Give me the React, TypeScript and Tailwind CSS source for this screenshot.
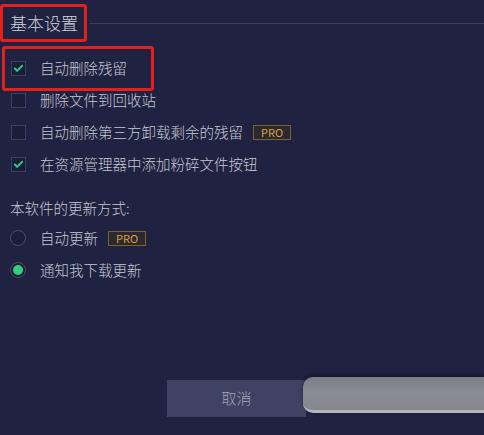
import { Check } from "lucide-react";

const font = { fontFamily: '"Noto Sans CJK SC", "Noto Sans", sans-serif' };

function Pro() {
  return (
    <span className="ml-[10px] inline-flex h-[15px] w-[38px] items-center justify-center border border-[#7d622c] bg-[#2c2830] text-[11px] leading-none text-[#d8a33c]">
      PRO
    </span>
  );
}

function CheckRow({ label, checked, pro }: { label: string; checked?: boolean; pro?: boolean }) {
  return (
    <div className="flex h-8 items-center pl-[11px]">
      <span className="flex h-[15px] w-[15px] items-center justify-center border border-[#3c4060] bg-[#1b1e38]">
        {checked && <Check size={11} strokeWidth={4} className="text-[#2fcf8a]" />}
      </span>
      <span className="ml-[14px] text-[14.5px] font-light text-[#c6c8d4]">{label}</span>
      {pro && <Pro />}
    </div>
  );
}

function RadioRow({ label, checked, pro }: { label: string; checked?: boolean; pro?: boolean }) {
  return (
    <div className="flex h-8 items-center pl-[10px]">
      <span className="flex h-4 w-4 items-center justify-center rounded-full border border-[#4a4e6a] bg-[#1b1e38]">
        {checked && <span className="h-[10px] w-[10px] rounded-full bg-[#2fd07c]" />}
      </span>
      <span className="ml-[14px] text-[14.5px] font-light text-[#c6c8d4]">{label}</span>
      {pro && <Pro />}
    </div>
  );
}

export default function App() {
  return (
    <div className="relative h-[435px] w-[484px] overflow-hidden bg-[#1f2240]" style={font}>
      {/* section title */}
      <div className="flex items-center pt-[12px]">
        <span className="pl-[10px] text-[17px] leading-[22px] font-light text-[#d2d4de]">基本设置</span>
        <div className="ml-[11px] h-px flex-1 bg-[#3a3e5e]" />
      </div>

      <div className="mt-[18px]">
        <CheckRow label="自动删除残留" checked />
        <CheckRow label="删除文件到回收站" />
        <CheckRow label="自动删除第三方卸载剩余的残留" pro />
        <CheckRow label="在资源管理器中添加粉碎文件按钮" checked />
      </div>

      <div className="mt-[18px] h-5 pl-[10px] text-[14.5px] leading-5 font-light text-[#c6c8d4]">本软件的更新方式:</div>

      <div className="mt-1">
        <RadioRow label="自动更新" pro />
        <RadioRow label="通知我下载更新" checked />
      </div>

      <div className="mt-[94px] flex pl-[167px]">
        <button className="h-[37px] w-[139px] bg-[#3f4262] text-[15px] font-light text-[#a3a6bc]">取消</button>
      </div>

      {/* grey bar lying over the right of the footer */}
      <div className="absolute left-[303px] top-[377px] h-[36px] w-[181px] rounded-l-[10px] border-b-[3px] border-[#b4b5bb] bg-gradient-to-b from-[#7e7f86] via-[#8c8d94] to-[#86878e] shadow-[0_-2px_4px_rgba(0,0,0,0.35)]" />

      {/* red annotation boxes */}
      <div className="absolute left-0 top-[4px] h-[38px] w-[87px] rounded-[3px] border-[3px] border-[#e2211d]" />
      <div className="absolute left-[2px] top-[46px] h-[45px] w-[152px] rounded-[3px] border-[3px] border-[#e2211d]" />
    </div>
  );
}
